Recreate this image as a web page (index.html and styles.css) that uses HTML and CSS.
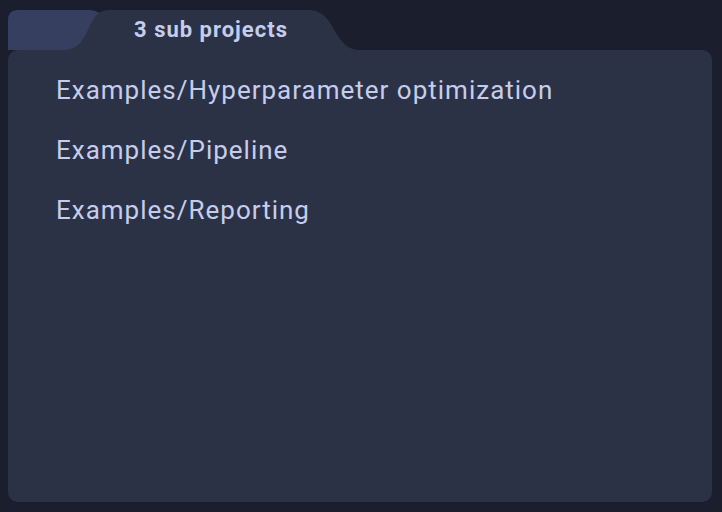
FILE: index.html
```html
<!DOCTYPE html>
<html>
<head>
<meta charset="utf-8">
<link rel="stylesheet" href="styles.css">
</head>
<body>
<div class="panel">
  <div class="tabs">
    <svg class="tab-shapes" width="704" height="40" viewBox="0 0 704 40">
      <path d="M0 40 L0 10 Q0 0 10 0 L82 0 Q92 0 96 10 L100 40 Z" fill="#373f60"/>
      <path d="M55 40 C70 40 75 30 80 20 C86 6 90 0 102 0 L300 0 C312 0 318 6 324 16 C332 30 338 40 352 40 Z" fill="#2c3245"/>
    </svg>
    <span class="title">3 sub projects</span>
  </div>
  <div class="card">
    <div class="item">Examples/Hyperparameter optimization</div>
    <div class="item">Examples/Pipeline</div>
    <div class="item">Examples/Reporting</div>
  </div>
</div>
</body>
</html>
```
FILE: styles.css
```css
html, body {
  margin: 0;
  padding: 0;
  background: #1b1e2c;
}
body {
  padding: 10px 10px 10px 8px;
  font-family: Roboto, "Liberation Sans", sans-serif;
}
.panel {
  width: 704px;
}
.tabs {
  position: relative;
  height: 40px;
}
.tab-shapes {
  position: absolute;
  left: 0;
  top: 0;
  display: block;
}
.title {
  position: relative;
  display: block;
  width: 304px;
  padding-left: 51px;
  text-align: center;
  line-height: 40px;
  font-size: 22px;
  font-weight: 700;
  letter-spacing: 1px;
  color: #c5cdee;
}
.card {
  height: 452px;
  background: #2c3245;
  border-radius: 10px;
  padding: 20px 48px 0;
  box-sizing: border-box;
}
.item {
  height: 60px;
  line-height: 40px;
  font-size: 26px;
  letter-spacing: 1px;
  color: #c5cdee;
}
```
